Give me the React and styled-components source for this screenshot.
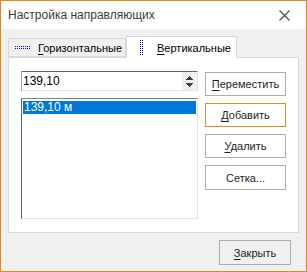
import React from 'react';
import styled, { createGlobalStyle } from 'styled-components';

const GlobalStyle = createGlobalStyle`
  html, body {
    margin: 0;
    padding: 0;
    background: #f0f0f0;
  }
  * {
    box-sizing: border-box;
  }
`;

const Window = styled.div`
  width: 307px;
  height: 272px;
  border: 1px solid #e3891c;
  display: flex;
  flex-direction: column;
  font-family: 'Liberation Sans', Arial, sans-serif;
  font-size: 11px;
  color: #000;
  background: #f0f0f0;
`;

const TitleBar = styled.div`
  height: 28px;
  flex: none;
  background: #fff;
  display: flex;
  align-items: center;
  justify-content: space-between;
  padding: 0 16px 0 7px;
  color: #3c3c3c;
  font-size: 12px;
`;

const CloseIcon = () => (
  <svg width="11" height="11" viewBox="0 0 11 11">
    <path d="M0.5 0.5 L10.5 10.5 M10.5 0.5 L0.5 10.5" stroke="#4a4a4a" strokeWidth="1.1" />
  </svg>
);

const Client = styled.div`
  flex: 1;
  display: flex;
  flex-direction: column;
  padding: 7px 7px 6px 7px;
`;

const TabStrip = styled.div`
  display: flex;
  align-items: flex-end;
  height: 21px;
  position: relative;
  z-index: 1;
`;

const Tab = styled.div`
  display: flex;
  align-items: center;
  flex: none;
  height: ${(p) => (p.$active ? '22px' : '19px')};
  width: ${(p) => p.$width}px;
  padding-left: ${(p) => p.$pad}px;
  border: 1px solid #d9d9d9;
  border-bottom: ${(p) => (p.$active ? 'none' : '1px solid #d9d9d9')};
  background: ${(p) => (p.$active ? '#fff' : '#f0f0f0')};
  margin-bottom: ${(p) => (p.$active ? '-1px' : '0')};
  gap: ${(p) => p.$gap}px;
  white-space: nowrap;

  svg {
    flex: none;
  }
`;

const Key = styled.span`
  text-decoration: underline;
  text-underline-offset: 2px;
`;

const Panel = styled.div`
  height: 176px;
  background: #fff;
  border: 1px solid #d9d9d9;
  display: flex;
  padding: 13px 0 0 12px;
  gap: 7px;
`;

const LeftCol = styled.div`
  width: 177px;
  display: flex;
  flex-direction: column;
  gap: 7px;
`;

const SpinEdit = styled.div`
  height: 20px;
  display: flex;
  border-top: 1px solid #646464;
  border-left: 1px solid #a0a0a0;
  border-right: 1px solid #e3e3e3;
  border-bottom: 1px solid #e3e3e3;
`;

const SpinText = styled.div`
  flex: 1;
  padding-left: 1px;
  display: flex;
  align-items: center;
  font-size: 12px;
`;

const SpinButtons = styled.div`
  width: 15px;
  background: #f0f0f0;
  display: flex;
  flex-direction: column;
  align-items: center;
  justify-content: space-around;
  padding: 2px 0;
`;

const Arrow = ({ up }) => (
  <svg width="7" height="4" viewBox="0 0 7 4" shapeRendering="crispEdges">
    <path d={up ? 'M0 4 L3.5 0 L7 4 Z' : 'M0 0 L3.5 4 L7 0 Z'} fill="#3a3a3a" />
  </svg>
);

const ListBox = styled.div`
  height: 121px;
  border-top: 1px solid #828282;
  border-left: 1px solid #696969;
  border-right: 1px solid #e3e3e3;
  border-bottom: 1px solid #e3e3e3;
  padding: 2px 1px 0 1px;
`;

const ListItem = styled.div`
  height: 13px;
  line-height: 13px;
  padding-left: 1px;
  font-size: 12px;
  background: ${(p) => (p.$selected ? '#0078d7' : 'transparent')};
  color: ${(p) => (p.$selected ? '#fff' : '#000')};
`;

const ButtonCol = styled.div`
  display: flex;
  flex-direction: column;
  gap: 7px;
  padding-top: 1px;
`;

const Button = styled.div`
  width: ${(p) => p.$width || 81}px;
  height: ${(p) => p.$height || 24}px;
  border: 1px solid ${(p) => (p.$default ? '#e3891c' : '#adadad')};
  display: flex;
  align-items: center;
  justify-content: center;
  color: #1e1e1e;
`;

const Footer = styled.div`
  display: flex;
  justify-content: flex-end;
  padding: 7px 8px 0 0;
`;

const HorizIcon = () => (
  <svg width="16" height="3" viewBox="0 0 16 3" shapeRendering="crispEdges">
    {Array.from({ length: 8 }).map((_, i) => (
      <React.Fragment key={i}>
        <rect x={i * 2} y={0} width="1" height="1" fill="#0000ff" />
        <rect x={i * 2} y={2} width="1" height="1" fill="#0000ff" />
      </React.Fragment>
    ))}
  </svg>
);

const VertIcon = () => (
  <svg width="3" height="16" viewBox="0 0 3 16" shapeRendering="crispEdges">
    {Array.from({ length: 8 }).map((_, i) => (
      <React.Fragment key={i}>
        <rect x={0} y={i * 2} width="1" height="1" fill="#0000ff" />
        <rect x={2} y={i * 2} width="1" height="1" fill="#0000ff" />
      </React.Fragment>
    ))}
  </svg>
);

export default function App() {
  return (
    <>
      <GlobalStyle />
      <Window>
        <TitleBar>
          <span>Настройка направляющих</span>
          <CloseIcon />
        </TitleBar>
        <Client>
          <TabStrip>
            <Tab $width={118} $pad={6} $gap={7}>
              <HorizIcon />
              <span>
                <Key>Г</Key>оризонтальные
              </span>
            </Tab>
            <Tab $active $width={111} $pad={13} $gap={14}>
              <VertIcon />
              <span>
                <Key>В</Key>ертикальные
              </span>
            </Tab>
          </TabStrip>
          <Panel>
            <LeftCol>
              <SpinEdit>
                <SpinText>139,10</SpinText>
                <SpinButtons>
                  <Arrow up />
                  <Arrow />
                </SpinButtons>
              </SpinEdit>
              <ListBox>
                <ListItem $selected>139,10 м</ListItem>
              </ListBox>
            </LeftCol>
            <ButtonCol>
              <Button>
                <span>
                  <Key>П</Key>ереместить
                </span>
              </Button>
              <Button $default>
                <span>
                  <Key>Д</Key>обавить
                </span>
              </Button>
              <Button>
                <span>
                  <Key>У</Key>далить
                </span>
              </Button>
              <Button $height={25}>Сетка...</Button>
            </ButtonCol>
          </Panel>
          <Footer>
            <Button $width={72} $height={25}>
              <span>
                <Key>З</Key>акрыть
              </span>
            </Button>
          </Footer>
        </Client>
      </Window>
    </>
  );
}
